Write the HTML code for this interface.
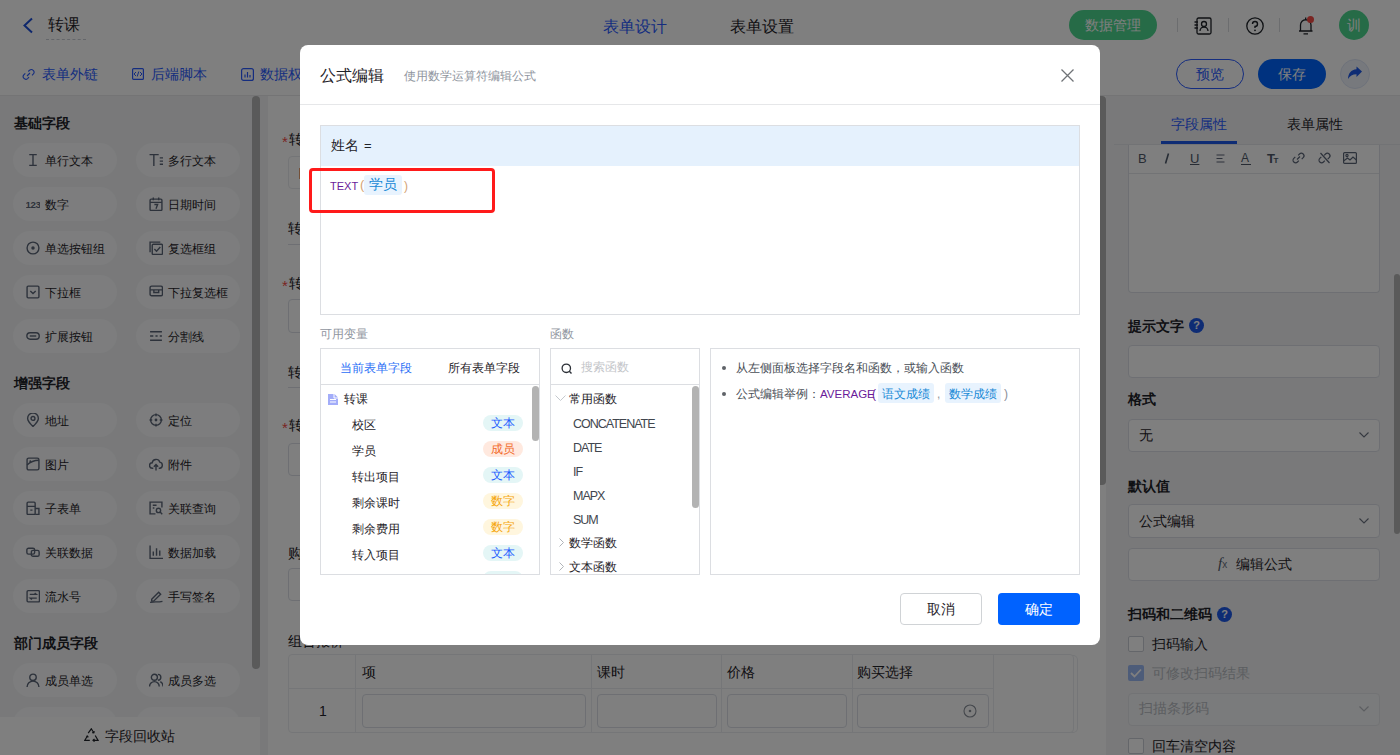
<!DOCTYPE html>
<html><head><meta charset="utf-8">
<style>
*{box-sizing:border-box;margin:0;padding:0}
html,body{width:1400px;height:755px;overflow:hidden;background:#fff;font-family:"Liberation Sans",sans-serif;color:#1f2329}
.a{position:absolute}
.t{position:absolute;white-space:nowrap;line-height:1}
#app{position:absolute;left:0;top:0;width:1400px;height:755px;background:#fff}
#hdr{left:0;top:0;width:1400px;height:51px;background:#fff;border-bottom:1px solid #e8e9eb}
#tb{left:0;top:50px;width:1400px;height:46px;background:#fff;border-bottom:1px solid #e8e9eb}
#side{left:0;top:96px;width:260px;height:659px;background:#f2f3f5}
#canvas{left:260px;top:96px;width:846px;height:659px;background:#f2f3f5}
#paper{left:268px;top:96px;width:838px;height:659px;background:#fff}
#right{left:1106px;top:96px;width:294px;height:659px;background:#f2f3f5}
.chip{position:absolute;width:104px;height:34px;border-radius:17px;background:#fafbfc;font-size:12px}
.chip span{position:absolute;left:32.5px;top:12px;line-height:13px}
.chip svg{position:absolute;left:13px;top:10px}
.sec{position:absolute;left:14px;font-size:14px;font-weight:bold;line-height:14px}
#mask{position:absolute;left:0;top:0;width:1400px;height:755px;background:rgba(0,0,0,.5)}
#modal{position:absolute;left:300px;top:45px;width:800px;height:600px;background:#fff;border-radius:8px;overflow:hidden}
.tag{position:absolute;left:162px;width:40px;height:16px;border-radius:8px;font-size:12px;line-height:16px;text-align:center}
.t1{background:#e4f6f6;color:#1f5eff}.t2{background:#ffe9df;color:#f26b2a}.t3{background:#fff6de;color:#f5a50a}
.fn{font-size:12.5px;line-height:13px;color:#41464e;letter-spacing:-1px}
</style></head><body>
<div id="app">
  <div id="hdr" class="a"></div>
  <div id="tb" class="a"></div>
  <div id="side" class="a"></div>
  <div id="canvas" class="a"></div>
  <div id="paper" class="a"></div>
  <div id="right" class="a"></div>

<svg class="a" style="left:22px;top:17px" width="12" height="17" viewBox="0 0 12 17"><path d="M10 1.5L2.5 8.5L10 15.5" fill="none" stroke="#1d4ed8" stroke-width="2"/></svg>
<div class="t" style="left:48px;top:17px;font-size:16px;line-height:16px">转课</div>
<div class="a" style="left:46px;top:39px;width:40px;height:0;border-top:1px dashed #c9cdd4"></div>
<div class="t" style="left:603px;top:18px;font-size:16.4px;line-height:16px;color:#2a5bff">表单设计</div>
<div class="t" style="left:730px;top:18px;font-size:16.4px;line-height:16px">表单设置</div>
<div class="a" style="left:1069px;top:10px;width:88px;height:30px;border-radius:15px;background:#4cd68f"></div>
<div class="t" style="left:1085px;top:18px;font-size:14px;line-height:14px;color:#fff">数据管理</div>
<div class="a" style="left:1177px;top:18px;width:1px;height:14px;background:#d9dbdf"></div>
<div class="a" style="left:1228px;top:18px;width:1px;height:14px;background:#d9dbdf"></div>
<div class="a" style="left:1279px;top:18px;width:1px;height:14px;background:#d9dbdf"></div>
<svg class="a" style="left:1194px;top:17px" width="18" height="18" viewBox="0 0 18 18"><rect x="3" y="1" width="14" height="16" rx="1.5" fill="none" stroke="#1f2329" stroke-width="1.3"/><circle cx="10" cy="7" r="2.5" fill="none" stroke="#1f2329" stroke-width="1.3"/><path d="M6 14A4 4 0 0 1 14 14M0.5 5H4M0.5 8H4M0.5 11H4" fill="none" stroke="#1f2329" stroke-width="1.3"/></svg>
<svg class="a" style="left:1246px;top:17px" width="18" height="18" viewBox="0 0 18 18"><circle cx="9" cy="9" r="8.2" fill="none" stroke="#1f2329" stroke-width="1.3"/><path d="M6.5 7A2.5 2.5 0 1 1 9 9.5V11" fill="none" stroke="#1f2329" stroke-width="1.4"/><circle cx="9" cy="13.3" r="0.9" fill="#1f2329"/></svg>
<svg class="a" style="left:1297px;top:16px" width="18" height="19" viewBox="0 0 18 19"><path d="M2 15H15.5M3.5 15V9A5.2 5.2 0 0 1 14 9V15M6.5 17.8H11M8.7 1.5V3.5" fill="none" stroke="#1f2329" stroke-width="1.3"/></svg>
<div class="a" style="left:1307px;top:16px;width:7px;height:7px;border-radius:4px;background:#f54a45"></div>
<div class="a" style="left:1339px;top:10px;width:30px;height:30px;border-radius:15px;background:#4cd68f"></div>
<div class="t" style="left:1347px;top:18px;font-size:14px;line-height:14px;color:#fff">训</div>

<svg class="a" style="left:22px;top:68px" width="13" height="13" viewBox="0 0 13 13"><path d="M5 8L8 5M6.3 3.5L7.6 2.2A2.7 2.7 0 0 1 11.4 6L10 7.4M3.3 5.3L1.8 6.8A2.7 2.7 0 0 0 5.6 10.6L7 9.2" fill="none" stroke="#2a5bff" stroke-width="1.1"/></svg>
<div class="t" style="left:42px;top:67px;font-size:14px;line-height:14px;color:#2a5bff">表单外链</div>
<svg class="a" style="left:132px;top:68px" width="12" height="12" viewBox="0 0 12 12"><rect x="0.6" y="0.6" width="10.8" height="10.8" rx="1" fill="none" stroke="#2a5bff" stroke-width="1.2"/><path d="M4 4L2 6L4 8M8 4L10 6L8 8M6.8 3.5L5.2 8.5" fill="none" stroke="#2a5bff" stroke-width="1"/></svg>
<div class="t" style="left:151px;top:67px;font-size:14px;line-height:14px;color:#2a5bff">后端脚本</div>
<svg class="a" style="left:241px;top:68px" width="13" height="13" viewBox="0 0 13 13"><rect x="0.6" y="0.6" width="11.8" height="11.8" rx="2" fill="none" stroke="#2a5bff" stroke-width="1.2"/><path d="M4 9.5V6.5M6.5 9.5V4M9 9.5V7" fill="none" stroke="#2a5bff" stroke-width="1.2"/></svg>
<div class="t" style="left:260px;top:67px;font-size:14px;line-height:14px;color:#2a5bff">数据权限</div>
<div class="a" style="left:1176px;top:59px;width:68px;height:30px;border-radius:15px;border:1px solid #2a5bff"></div>
<div class="t" style="left:1196px;top:67px;font-size:14px;line-height:14px;color:#2a5bff">预览</div>
<div class="a" style="left:1258px;top:59px;width:68px;height:30px;border-radius:15px;background:#0064ff"></div>
<div class="t" style="left:1278px;top:67px;font-size:14px;line-height:14px;color:#fff">保存</div>
<div class="a" style="left:1340px;top:59px;width:30px;height:30px;border-radius:15px;background:#eef2fb;border:1px solid #dde5f5"></div>
<svg class="a" style="left:1347px;top:66px" width="16" height="15" viewBox="0 0 16 15"><path d="M15 5.5L9.5 0.5V3.3C4 3.8 1.2 7.5 1 13C2.8 9.8 5.5 8.3 9.5 8.2V11Z" fill="#1d58e8"/></svg>
<div class="sec" style="top:116px">基础字段</div><div class="chip" style="left:12.5px;top:143px"><svg width="14" height="14" viewBox="0 0 13 13"><path d="M3 1.5H10M3 11.5H10M6.5 1.5V11.5" fill="none" stroke="#5b6577" stroke-width="1.3"/></svg><span>单行文本</span></div><div class="chip" style="left:135.5px;top:143px"><svg width="14" height="14" viewBox="0 0 13 13"><path d="M0.5 1.5H9M4.5 1.5V12M10 4.5H13M10 7.5H13M10 10.5H13" fill="none" stroke="#5b6577" stroke-width="1.3"/></svg><span>多行文本</span></div><div class="chip" style="left:12.5px;top:187px"><svg width="14" height="14" viewBox="0 0 13 13"><text x="-0.5" y="10" font-size="9" font-weight="bold" fill="#5b6577" font-family="Liberation Sans" letter-spacing="-0.3">123</text></svg><span>数字</span></div><div class="chip" style="left:135.5px;top:187px"><svg width="14" height="14" viewBox="0 0 13 13"><rect x="1" y="2" width="11" height="10.5" rx="1" fill="none" stroke="#5b6577" stroke-width="1.3"/><path d="M1 5H12M4 0.5V3M9 0.5V3M5 7H8L6.5 11" fill="none" stroke="#5b6577" stroke-width="1.3"/></svg><span>日期时间</span></div><div class="chip" style="left:12.5px;top:231px"><svg width="14" height="14" viewBox="0 0 13 13"><circle cx="6.5" cy="6.5" r="5.5" fill="none" stroke="#5b6577" stroke-width="1.3"/><circle cx="6.5" cy="6.5" r="1.6" fill="#5b6577"/></svg><span>单选按钮组</span></div><div class="chip" style="left:135.5px;top:231px"><svg width="14" height="14" viewBox="0 0 13 13"><path d="M1 10.5V1H10.5" fill="none" stroke="#5b6577" stroke-width="1.3"/><rect x="3" y="3" width="9.5" height="9.5" rx="1" fill="none" stroke="#5b6577" stroke-width="1.3"/><path d="M5 7.5L7 9.5L10.5 5.5" fill="none" stroke="#5b6577" stroke-width="1.3"/></svg><span>复选框组</span></div><div class="chip" style="left:12.5px;top:275px"><svg width="14" height="14" viewBox="0 0 13 13"><rect x="1" y="1" width="11" height="11" rx="1" fill="none" stroke="#5b6577" stroke-width="1.3"/><path d="M4 5.5L6.5 8L9 5.5" fill="none" stroke="#5b6577" stroke-width="1.3"/></svg><span>下拉框</span></div><div class="chip" style="left:135.5px;top:275px"><svg width="14" height="14" viewBox="0 0 13 13"><rect x="1" y="1" width="11.5" height="9" rx="1.5" fill="none" stroke="#5b6577" stroke-width="1.3"/><path d="M1 4.5H12.5M4.5 4.5V7H9V4.5" fill="none" stroke="#5b6577" stroke-width="1.3"/></svg><span>下拉复选框</span></div><div class="chip" style="left:12.5px;top:319px"><svg width="14" height="14" viewBox="0 0 13 13"><rect x="0.8" y="3.5" width="11.5" height="6" rx="3" fill="none" stroke="#5b6577" stroke-width="1.3"/><path d="M3.5 6.5H9.5" fill="none" stroke="#5b6577" stroke-width="1.3"/></svg><span>扩展按钮</span></div><div class="chip" style="left:135.5px;top:319px"><svg width="14" height="14" viewBox="0 0 13 13"><path d="M1 2.5H12M1 6.5H4M6 6.5H8M10 6.5H12M1 10.5H12" fill="none" stroke="#5b6577" stroke-width="1.3"/></svg><span>分割线</span></div><div class="sec" style="top:376px">增强字段</div><div class="chip" style="left:12.5px;top:403px"><svg width="14" height="14" viewBox="0 0 13 13"><path d="M6.5 12.5C3 9 1.5 7 1.5 5A5 5 0 0 1 11.5 5C11.5 7 10 9 6.5 12.5Z" fill="none" stroke="#5b6577" stroke-width="1.3"/><circle cx="6.5" cy="5" r="1.8" fill="none" stroke="#5b6577" stroke-width="1.3"/></svg><span>地址</span></div><div class="chip" style="left:135.5px;top:403px"><svg width="14" height="14" viewBox="0 0 13 13"><circle cx="6.5" cy="6.5" r="5" fill="none" stroke="#5b6577" stroke-width="1.3"/><circle cx="6.5" cy="6.5" r="1.3" fill="#5b6577"/><path d="M6.5 0.5V3M6.5 10V12.5M0.5 6.5H3M10 6.5H12.5" fill="none" stroke="#5b6577" stroke-width="1.3"/></svg><span>定位</span></div><div class="chip" style="left:12.5px;top:447px"><svg width="14" height="14" viewBox="0 0 13 13"><rect x="1" y="1" width="11" height="11" rx="1.5" fill="none" stroke="#5b6577" stroke-width="1.3"/><path d="M1 7.5C4 4.5 7 3 12 3" fill="none" stroke="#5b6577" stroke-width="1.3"/><circle cx="4" cy="4" r="0.9" fill="#5b6577"/></svg><span>图片</span></div><div class="chip" style="left:135.5px;top:447px"><svg width="14" height="14" viewBox="0 0 13 13"><path d="M4 10.5H3.2A2.6 2.6 0 0 1 3 5.3A3.6 3.6 0 0 1 10 4.8A2.9 2.9 0 0 1 10 10.5H9M6.5 12.5V7M4.5 9L6.5 7L8.5 9" fill="none" stroke="#5b6577" stroke-width="1.3"/></svg><span>附件</span></div><div class="chip" style="left:12.5px;top:491px"><svg width="14" height="14" viewBox="0 0 13 13"><rect x="1" y="1" width="7.5" height="11.5" rx="1" fill="none" stroke="#5b6577" stroke-width="1.3"/><path d="M1 5H8.5M8.5 7H12V12.5H8.5M4 8.5H6" fill="none" stroke="#5b6577" stroke-width="1.3"/></svg><span>子表单</span></div><div class="chip" style="left:135.5px;top:491px"><svg width="14" height="14" viewBox="0 0 13 13"><path d="M12 6V1H1V12H6" fill="none" stroke="#5b6577" stroke-width="1.3"/><path d="M3.5 4H7M3.5 6.5H5" fill="none" stroke="#5b6577" stroke-width="1.3"/><circle cx="8.8" cy="8.8" r="2" fill="none" stroke="#5b6577" stroke-width="1.3"/><path d="M10.3 10.3L12.3 12.3" fill="none" stroke="#5b6577" stroke-width="1.3"/></svg><span>关联查询</span></div><div class="chip" style="left:12.5px;top:535px"><svg width="14" height="14" viewBox="0 0 13 13"><rect x="0.8" y="3" width="7.2" height="5.5" rx="1.5" fill="none" stroke="#5b6577" stroke-width="1.3"/><rect x="5" y="5" width="7.2" height="5.5" rx="1.5" fill="none" stroke="#5b6577" stroke-width="1.3"/></svg><span>关联数据</span></div><div class="chip" style="left:135.5px;top:535px"><svg width="14" height="14" viewBox="0 0 13 13"><path d="M1 0.5V12.5H13M4 6V10M7 3V10M10 5V10" fill="none" stroke="#5b6577" stroke-width="1.3"/></svg><span>数据加载</span></div><div class="chip" style="left:12.5px;top:579px"><svg width="14" height="14" viewBox="0 0 13 13"><rect x="1" y="1.5" width="11.5" height="10.5" rx="1" fill="none" stroke="#5b6577" stroke-width="1.3"/><path d="M3.5 5H9.5L8 3.8M10 8.5H4L5.5 9.7" fill="none" stroke="#5b6577" stroke-width="1.3"/></svg><span>流水号</span></div><div class="chip" style="left:135.5px;top:579px"><svg width="14" height="14" viewBox="0 0 13 13"><path d="M2.5 9.5L9 3L10.8 4.8L4.3 11.3H2.5Z" fill="none" stroke="#5b6577" stroke-width="1.3"/><path d="M1 12.5C4 11.5 8 12.5 12.5 11.5" fill="none" stroke="#5b6577" stroke-width="1.3"/></svg><span>手写签名</span></div><div class="sec" style="top:636px">部门成员字段</div><div class="chip" style="left:12.5px;top:663px"><svg width="14" height="14" viewBox="0 0 13 13"><circle cx="6.5" cy="4" r="3" fill="none" stroke="#5b6577" stroke-width="1.3"/><path d="M1 13A5.5 5.5 0 0 1 12 13" fill="none" stroke="#5b6577" stroke-width="1.3"/></svg><span>成员单选</span></div><div class="chip" style="left:135.5px;top:663px"><svg width="14" height="14" viewBox="0 0 13 13"><circle cx="5" cy="4" r="2.8" fill="none" stroke="#5b6577" stroke-width="1.3"/><path d="M0.5 12.5A4.5 4.5 0 0 1 9.5 12.5M8.3 1.3A2.7 2.7 0 0 1 8.3 6.7M10.5 8A4.8 4.8 0 0 1 13 12.5" fill="none" stroke="#5b6577" stroke-width="1.3"/></svg><span>成员多选</span></div><div class="chip" style="left:12.5px;top:707px"><svg width="14" height="14" viewBox="0 0 13 13"><circle cx="6.5" cy="4" r="3" fill="none" stroke="#5b6577" stroke-width="1.3"/><path d="M1 13A5.5 5.5 0 0 1 12 13" fill="none" stroke="#5b6577" stroke-width="1.3"/></svg><span></span></div><div class="chip" style="left:135.5px;top:707px"><svg width="14" height="14" viewBox="0 0 13 13"><circle cx="5" cy="4" r="2.8" fill="none" stroke="#5b6577" stroke-width="1.3"/><path d="M0.5 12.5A4.5 4.5 0 0 1 9.5 12.5M8.3 1.3A2.7 2.7 0 0 1 8.3 6.7M10.5 8A4.8 4.8 0 0 1 13 12.5" fill="none" stroke="#5b6577" stroke-width="1.3"/></svg><span></span></div><div class="a" style="left:252px;top:96px;width:8px;height:573px;border-radius:4px;background:#b5b5b5"></div><div class="a" style="left:0;top:717px;width:260px;height:38px;background:#fff"></div><svg class="a" style="left:84px;top:728px" width="15" height="14" viewBox="0 0 15 14"><path d="M4.2 5.2L7.3 0.8L9.8 4.8M8.2 4.6L9.8 4.8L10.4 3.3M11.2 7.5L14 12.3H9M10.5 10.8L9 12.3L10.5 13.6M5.8 12.3H0.8L3.4 8M2.3 8.6L3.4 8L4.3 9.3" fill="none" stroke="#1f2329" stroke-width="1.2"/></svg><div class="t" style="left:105px;top:729px;font-size:14px;line-height:14px">字段回收站</div>

<div class="a" style="left:1100px;top:96px;width:6px;height:389px;border-radius:0 4px 4px 0;background:#b5b5b5"></div>
<div class="t" style="left:282px;top:134px;font-size:15px;line-height:15px;color:#f54a45">*</div>
<div class="t" style="left:289px;top:132px;font-size:14px;line-height:14px">转出校区</div>
<div class="a" style="left:288px;top:156px;width:790px;height:33px;border:1px solid #e9ebee;border-radius:4px"></div><div class="a" style="left:299px;top:168px;width:1.5px;height:11px;background:#e8a070"></div>
<div class="t" style="left:288px;top:221px;font-size:14px;line-height:14px">转出项目</div>
<div class="a" style="left:288px;top:244px;width:790px;height:1px;background:#dcdfe6"></div>
<div class="t" style="left:282px;top:278px;font-size:15px;line-height:15px;color:#f54a45">*</div>
<div class="t" style="left:289px;top:276px;font-size:14px;line-height:14px">转入校区</div>
<div class="a" style="left:288px;top:299px;width:790px;height:34px;border:1px solid #dcdfe6;border-radius:4px"></div>
<div class="t" style="left:288px;top:365px;font-size:14px;line-height:14px">转入项目</div>
<div class="a" style="left:288px;top:387px;width:790px;height:1px;background:#dcdfe6"></div>
<div class="t" style="left:282px;top:420px;font-size:15px;line-height:15px;color:#f54a45">*</div>
<div class="t" style="left:289px;top:418px;font-size:14px;line-height:14px">转入课时</div>
<div class="a" style="left:288px;top:443px;width:790px;height:33px;border:1px solid #dcdfe6;border-radius:4px"></div>
<div class="t" style="left:288px;top:546px;font-size:14px;line-height:14px">购买金额</div>
<div class="a" style="left:288px;top:568px;width:790px;height:33px;border:1px solid #dcdfe6;border-radius:4px"></div>
<div class="t" style="left:288px;top:634px;font-size:14px;line-height:14px">组合报价</div>
<div class="a" style="left:1066px;top:655px;width:12px;height:78px;border:1px solid #ebedf0;border-left:none;border-radius:0 5px 5px 0"></div><div class="a" style="left:288px;top:654px;width:786px;height:79px;border:1px solid #ebedf0;border-radius:4px;background:#fff"></div>
<div class="a" style="left:289px;top:688px;width:704px;height:1px;background:#ebedf0"></div>
<div class="a" style="left:355px;top:655px;width:1px;height:77px;background:#ebedf0"></div>
<div class="a" style="left:591px;top:655px;width:1px;height:77px;background:#ebedf0"></div>
<div class="a" style="left:721px;top:655px;width:1px;height:77px;background:#ebedf0"></div>
<div class="a" style="left:852px;top:655px;width:1px;height:77px;background:#ebedf0"></div>
<div class="a" style="left:993px;top:655px;width:1px;height:77px;background:#ebedf0"></div>
<div class="t" style="left:362px;top:665px;font-size:14px;line-height:14px">项</div>
<div class="t" style="left:597px;top:665px;font-size:14px;line-height:14px">课时</div>
<div class="t" style="left:727px;top:665px;font-size:14px;line-height:14px">价格</div>
<div class="t" style="left:857px;top:665px;font-size:14px;line-height:14px">购买选择</div>
<div class="t" style="left:319px;top:704px;font-size:14px;line-height:14px">1</div>
<div class="a" style="left:362px;top:694px;width:224px;height:34px;border:1px solid #dcdfe6;border-radius:4px;background:#fff"></div>
<div class="a" style="left:597px;top:694px;width:120px;height:34px;border:1px solid #dcdfe6;border-radius:4px;background:#fff"></div>
<div class="a" style="left:727px;top:694px;width:120px;height:34px;border:1px solid #dcdfe6;border-radius:4px;background:#fff"></div>
<div class="a" style="left:857px;top:694px;width:132px;height:34px;border:1px solid #dcdfe6;border-radius:4px;background:#fff"></div>
<svg class="a" style="left:963px;top:704px" width="14" height="14" viewBox="0 0 14 14"><circle cx="7" cy="7" r="6" fill="none" stroke="#8a9099" stroke-width="1.1"/><circle cx="7" cy="7" r="1.3" fill="#8a9099"/></svg>


<div class="t" style="left:1171px;top:117px;font-size:14px;line-height:14px;color:#2a5bff">字段属性</div>
<div class="t" style="left:1287px;top:117px;font-size:14px;line-height:14px">表单属性</div>
<div class="a" style="left:1161px;top:141px;width:76px;height:3px;background:#1d58e8"></div>
<div class="a" style="left:1114px;top:144px;width:286px;height:1px;background:#e4e6ea"></div>
<div class="a" style="left:1128px;top:145px;width:252px;height:148px;border:1px solid #dcdfe6;border-top:none;border-radius:0 0 4px 4px;background:#fff"></div>
<div class="a" style="left:1129px;top:173px;width:250px;height:1px;background:#e4e6ea"></div>
<div class="t" style="left:1138px;top:152px;font-size:13px;line-height:13px;color:#4e5969">B</div>
<svg class="a" style="left:1164px;top:153px" width="6" height="11" viewBox="0 0 6 11"><path d="M4.5 0.5L1.5 10.5" fill="none" stroke="#4e5969" stroke-width="1.6"/></svg>
<div class="t" style="left:1190px;top:152px;font-size:13px;line-height:13px;color:#4e5969;text-decoration:underline">U</div>
<svg class="a" style="left:1216px;top:154px" width="9" height="9" viewBox="0 0 9 9"><path d="M0.5 1H8.5M0.5 4.5H6.5M0.5 8H8.5" fill="none" stroke="#5b6577" stroke-width="1.2"/></svg>
<div class="t" style="left:1241px;top:152px;font-size:12px;line-height:12px;color:#4e5969">A</div>
<div class="a" style="left:1241px;top:164px;width:10px;height:1px;background:#4e5969"></div>
<div class="t" style="left:1267px;top:152px;font-size:13px;line-height:13px;color:#4e5969;letter-spacing:-1.5px;font-weight:bold">T<span style="font-size:8px">T</span></div>
<svg class="a" style="left:1292px;top:152px" width="13" height="12" viewBox="0 0 13 12"><path d="M5 7.5L8 4.5M6.2 3.3L7.5 2A2.6 2.6 0 0 1 11.2 5.7L9.7 7.2M3.3 4.8L1.8 6.3A2.6 2.6 0 0 0 5.5 10L6.8 8.7" fill="none" stroke="#5b6577" stroke-width="1.2"/></svg>
<svg class="a" style="left:1318px;top:152px" width="13" height="12" viewBox="0 0 13 12"><path d="M6.2 3.3L7.5 2A2.6 2.6 0 0 1 11.2 5.7L9.7 7.2M3.3 4.8L1.8 6.3A2.6 2.6 0 0 0 5.5 10L6.8 8.7M2.5 1L11.5 11" fill="none" stroke="#5b6577" stroke-width="1.2"/></svg>
<svg class="a" style="left:1343px;top:152px" width="14" height="12" viewBox="0 0 14 12"><rect x="0.6" y="0.6" width="12.8" height="10.8" rx="1" fill="none" stroke="#5b6577" stroke-width="1.2"/><path d="M0.6 9L4.5 6L7 8L10 5L13.4 8" fill="none" stroke="#5b6577" stroke-width="1.2"/><circle cx="4" cy="3.5" r="1.1" fill="none" stroke="#5b6577" stroke-width="1.2"/></svg>
<div class="t" style="left:1128px;top:319px;font-size:14px;line-height:14px;font-weight:bold">提示文字</div>
<div class="a" style="left:1189px;top:318px;width:15px;height:15px;border-radius:8px;background:#1d58e8;color:#fff;font-size:11px;line-height:15px;text-align:center;font-weight:bold">?</div>
<div class="a" style="left:1128px;top:345px;width:252px;height:33px;border:1px solid #dcdfe6;border-radius:4px;background:#fff"></div>
<div class="t" style="left:1128px;top:392px;font-size:14px;line-height:14px;font-weight:bold">格式</div>
<div class="a" style="left:1128px;top:419px;width:252px;height:33px;border:1px solid #dcdfe6;border-radius:4px;background:#fff"></div>
<div class="t" style="left:1139px;top:428px;font-size:14px;line-height:14px">无</div>
<svg class="a" style="left:1359px;top:432px" width="10" height="6" viewBox="0 0 10 6"><path d="M0.5 0.5L5 5L9.5 0.5" fill="none" stroke="#6b7280" stroke-width="1.1"/></svg>
<div class="t" style="left:1128px;top:479px;font-size:14px;line-height:14px;font-weight:bold">默认值</div>
<div class="a" style="left:1128px;top:504px;width:252px;height:34px;border:1px solid #dcdfe6;border-radius:4px;background:#fff"></div>
<div class="t" style="left:1139px;top:514px;font-size:14px;line-height:14px">公式编辑</div>
<svg class="a" style="left:1359px;top:518px" width="10" height="6" viewBox="0 0 10 6"><path d="M0.5 0.5L5 5L9.5 0.5" fill="none" stroke="#6b7280" stroke-width="1.1"/></svg>
<div class="a" style="left:1128px;top:548px;width:252px;height:33px;border:1px solid #dcdfe6;border-radius:4px;background:#fff"></div>
<div class="t" style="left:1218px;top:556px;font-size:15px;line-height:15px;font-family:'Liberation Serif',serif;font-style:italic;color:#4e5969">f<span style="font-size:10px;font-family:'Liberation Sans',sans-serif;font-style:normal;color:#6b7280">x</span></div>
<div class="t" style="left:1236px;top:557px;font-size:14px;line-height:14px">编辑公式</div>
<div class="t" style="left:1128px;top:607px;font-size:14px;line-height:14px;font-weight:bold">扫码和二维码</div>
<div class="a" style="left:1217px;top:607px;width:15px;height:15px;border-radius:8px;background:#1d58e8;color:#fff;font-size:11px;line-height:15px;text-align:center;font-weight:bold">?</div>
<div class="a" style="left:1128px;top:636px;width:16px;height:16px;border:1px solid #c9cdd4;border-radius:2px;background:#fff"></div>
<div class="t" style="left:1152px;top:637px;font-size:14px;line-height:14px">扫码输入</div>
<div class="a" style="left:1128px;top:665px;width:16px;height:16px;border-radius:2px;background:#9bb8f3"></div>
<svg class="a" style="left:1130px;top:668px" width="12" height="10" viewBox="0 0 12 10"><path d="M1 5L4.5 8.5L11 1.5" fill="none" stroke="#fff" stroke-width="1.8"/></svg>
<div class="t" style="left:1152px;top:666px;font-size:14px;line-height:14px;color:#b8bcc2">可修改扫码结果</div>
<div class="a" style="left:1128px;top:693px;width:252px;height:33px;border:1px solid #e4e6ea;border-radius:4px;background:#f5f6f8"></div>
<div class="t" style="left:1139px;top:701px;font-size:14px;line-height:14px;color:#b8bcc2">扫描条形码</div>
<svg class="a" style="left:1359px;top:706px" width="10" height="6" viewBox="0 0 10 6"><path d="M0.5 0.5L5 5L9.5 0.5" fill="none" stroke="#b8bcc2" stroke-width="1.2"/></svg>
<div class="a" style="left:1128px;top:738px;width:16px;height:16px;border:1px solid #c9cdd4;border-radius:2px;background:#fff"></div>
<div class="t" style="left:1152px;top:739px;font-size:14px;line-height:14px">回车清空内容</div>
<div class="a" style="left:1394px;top:274px;width:6px;height:260px;border-radius:3px;background:#b5b5b5"></div>

</div>
<div id="mask"></div>
<div id="modal">
  <div class="t" style="left:20px;top:23px;font-size:16px;line-height:16px;color:#1f2329">公式编辑</div>
  <div class="t" style="left:104px;top:25px;font-size:12px;line-height:12px;color:#8f959e">使用数学运算符编辑公式</div>
  <svg class="a" style="left:761px;top:24px" width="13" height="13" viewBox="0 0 13 13"><path d="M0.5 0.5L12.5 12.5M12.5 0.5L0.5 12.5" stroke="#6f7377" stroke-width="1.3"/></svg>
  <div class="a" style="left:0;top:59px;width:800px;height:1px;background:#e6e7e9"></div>
  <div class="a" style="left:20px;top:80px;width:760px;height:190px;border:1px solid #dcdee2"></div>
  <div class="a" style="left:21px;top:81px;width:758px;height:40px;background:#e5f1fd"></div>
  <div class="t" style="left:31px;top:94px;font-size:13.5px;line-height:14px;color:#1f2329">姓名</div><div class="t" style="left:64px;top:94px;font-size:13px;line-height:14px;color:#1f2329">=</div>
  <div class="t" style="left:30px;top:135px;font-size:11px;line-height:12px;color:#6a1b9a">TEXT</div>
  <div class="t" style="left:60px;top:133px;font-size:13px;line-height:14px;color:#d4a373">(</div>
  <div class="a" style="left:64px;top:130px;width:38px;height:20px;background:#e8f3fe;border-radius:3px"></div>
  <div class="t" style="left:69px;top:133px;font-size:13.5px;line-height:14px;color:#1789d6">学员</div>
  <div class="t" style="left:104px;top:134px;font-size:12px;line-height:14px;color:#d4a373">)</div>
  <div class="a" style="left:9px;top:123px;width:186px;height:45px;border:3px solid #ff1a1a;border-radius:4px"></div>
  <div class="t" style="left:20px;top:283px;font-size:12px;line-height:12px;color:#8f959e">可用变量</div>
  <div class="t" style="left:250px;top:283px;font-size:12px;line-height:12px;color:#8f959e">函数</div>
  <div class="a" style="left:20px;top:303px;width:220px;height:227px;border:1px solid #dcdee2;overflow:hidden;background:#fff">
    <div class="t" style="left:19px;top:13px;font-size:12px;line-height:13px;color:#2b6ff6">当前表单字段</div>
    <div class="t" style="left:127px;top:13px;font-size:12px;line-height:13px;color:#1f2329">所有表单字段</div>
    <div class="a" style="left:0;top:35px;width:220px;height:1px;background:#dcdee2"></div>
    <svg class="a" style="left:7px;top:45px" width="10" height="11" viewBox="0 0 10 11"><path d="M0 0H6.5L10 3.5V11H0Z" fill="#a3adf9"/><path d="M2 5.5H8M2 8H8" stroke="#fff" stroke-width="1.2"/><path d="M6 0V4H10" fill="none" stroke="#fff" stroke-width="1"/></svg>
    <div class="t" style="left:23px;top:43px;font-size:12px;line-height:14px">转课</div>
    <div class="t" style="left:31px;top:69px;font-size:12px;line-height:14px">校区</div><div class="tag t1" style="top:66px">文本</div><div class="t" style="left:31px;top:95px;font-size:12px;line-height:14px">学员</div><div class="tag t2" style="top:92px">成员</div><div class="t" style="left:31px;top:121px;font-size:12px;line-height:14px">转出项目</div><div class="tag t1" style="top:118px">文本</div><div class="t" style="left:31px;top:147px;font-size:12px;line-height:14px">剩余课时</div><div class="tag t3" style="top:144px">数字</div><div class="t" style="left:31px;top:173px;font-size:12px;line-height:14px">剩余费用</div><div class="tag t3" style="top:170px">数字</div><div class="t" style="left:31px;top:199px;font-size:12px;line-height:14px">转入项目</div><div class="tag t1" style="top:196px">文本</div><div class="tag t1" style="top:222px"></div>
    <div class="a" style="left:211px;top:37px;width:7px;height:55px;border-radius:4px;background:#b3b3b3"></div>
  </div>
  <div class="a" style="left:250px;top:303px;width:150px;height:227px;border:1px solid #dcdee2;overflow:hidden;background:#fff">
    <svg class="a" style="left:10px;top:14px" width="12" height="12" viewBox="0 0 12 12"><circle cx="5.3" cy="5.3" r="4.2" fill="none" stroke="#2b2f36" stroke-width="1.3"/><path d="M8.3 8.3L10.5 10.5" stroke="#2b2f36" stroke-width="1.4"/></svg>
    <div class="t" style="left:30px;top:12px;font-size:12px;line-height:13px;color:#c3c5c9">搜索函数</div>
    <div class="a" style="left:0;top:35px;width:150px;height:1px;background:#dcdee2"></div>
    <svg class="a" style="left:4px;top:46px" width="11" height="7" viewBox="0 0 11 7"><path d="M0.5 0.5L5.5 5.5L10.5 0.5" fill="none" stroke="#c5c9ce" stroke-width="1"/></svg>
    <div class="t" style="left:18px;top:43px;font-size:12px;line-height:14px">常用函数</div>
    <div class="t fn" style="left:22px;top:69px">CONCATENATE</div><div class="t fn" style="left:22px;top:93px">DATE</div><div class="t fn" style="left:22px;top:117px">IF</div><div class="t fn" style="left:22px;top:141px">MAPX</div><div class="t fn" style="left:22px;top:165px">SUM</div>
    <svg class="a" style="left:8px;top:189px" width="5" height="9" viewBox="0 0 5 9"><path d="M0.5 0.5L4.5 4.5L0.5 8.5" fill="none" stroke="#b0b4b9" stroke-width="1"/></svg>
    <div class="t" style="left:18px;top:187px;font-size:12px;line-height:14px">数学函数</div>
    <svg class="a" style="left:8px;top:213px" width="5" height="9" viewBox="0 0 5 9"><path d="M0.5 0.5L4.5 4.5L0.5 8.5" fill="none" stroke="#b0b4b9" stroke-width="1"/></svg>
    <div class="t" style="left:18px;top:211px;font-size:12px;line-height:14px">文本函数</div>
    <div class="a" style="left:141px;top:37px;width:7px;height:122px;border-radius:4px;background:#b3b3b3"></div>
  </div>
  <div class="a" style="left:410px;top:303px;width:370px;height:227px;border:1px solid #dcdee2;background:#fff">
    <div class="a" style="left:11px;top:17px;width:4px;height:4px;border-radius:2px;background:#5f6368"></div>
    <div class="t" style="left:25px;top:12px;font-size:12px;line-height:14px;color:#4a4f57">从左侧面板选择字段名和函数，或输入函数</div>
    <div class="a" style="left:11px;top:43px;width:4px;height:4px;border-radius:2px;background:#5f6368"></div>
    <div class="t" style="left:25px;top:38px;font-size:12px;line-height:14px;color:#4a4f57">公式编辑举例：</div>
    <div class="t" style="left:109px;top:39px;font-size:11.5px;line-height:13px;color:#6a1b9a">AVERAGE</div>
    <div class="t" style="left:161px;top:38px;font-size:12px;line-height:14px;color:#6a1b9a">(</div>
    <div class="a" style="left:167px;top:34px;width:56px;height:20px;background:#e8f3fe;border-radius:3px"></div>
    <div class="t" style="left:171px;top:38px;font-size:12px;line-height:14px;color:#1789d6">语文成绩</div>
    <div class="t" style="left:226px;top:38px;font-size:12px;line-height:14px;color:#8f959e">,</div>
    <div class="a" style="left:234px;top:34px;width:56px;height:20px;background:#e8f3fe;border-radius:3px"></div>
    <div class="t" style="left:238px;top:38px;font-size:12px;line-height:14px;color:#1789d6">数学成绩</div>
    <div class="t" style="left:293px;top:38px;font-size:12px;line-height:14px;color:#8a8f99">)</div>
  </div>
  <div class="a" style="left:600px;top:548px;width:82px;height:32px;border:1px solid #d0d3d6;border-radius:4px"></div>
  <div class="t" style="left:627px;top:557px;font-size:14px;line-height:14px;color:#1f2329">取消</div>
  <div class="a" style="left:698px;top:548px;width:82px;height:32px;background:#0062ff;border-radius:4px"></div>
  <div class="t" style="left:725px;top:557px;font-size:14px;line-height:14px;color:#fff">确定</div>
</div>
</body></html>
